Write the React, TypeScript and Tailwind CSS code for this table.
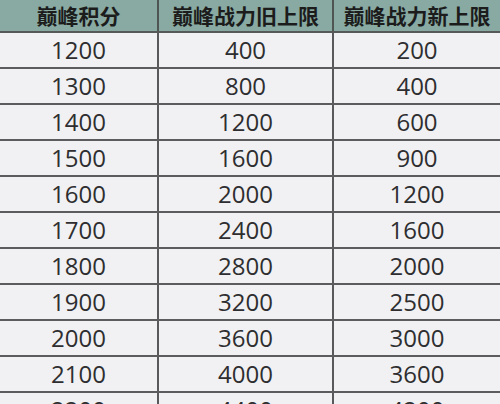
import React from 'react';

const rows = [
  ['1200', '400', '200'],
  ['1300', '800', '400'],
  ['1400', '1200', '600'],
  ['1500', '1600', '900'],
  ['1600', '2000', '1200'],
  ['1700', '2400', '1600'],
  ['1800', '2800', '2000'],
  ['1900', '3200', '2500'],
  ['2000', '3600', '3000'],
  ['2100', '4000', '3600'],
  ['2200', '4400', '4200'],
];

const cjk = { fontFamily: '"Noto Sans CJK SC", "Noto Sans", sans-serif' };
const num = { fontFamily: '"Open Sans", "Noto Sans", sans-serif' };

const App = () => {
  return (
    <div className="w-[500px] h-[404px] overflow-hidden bg-[#f1f1f3]">
      {/* header */}
      <div className="flex h-[33px] bg-[#88aaa2] border-b-2 border-[#555a58] text-[21px] font-bold text-[#1c1c1c] leading-none" style={cjk}>
        <div className="w-[159px] border-r-2 border-[#4f5553] flex items-center justify-center">巅峰积分</div>
        <div className="w-[175px] border-r-2 border-[#4f5553] flex items-center justify-center">巅峰战力旧上限</div>
        <div className="flex-1 flex items-center justify-center">巅峰战力新上限</div>
      </div>

      {rows.map((r, i) => (
        <div key={i} className="flex h-[36px] border-b-2 border-[#5c5c5e] text-[24px] text-[#2e2e30] leading-none" style={num}>
          <div className="w-[159px] border-r-2 border-[#59595b] flex items-center justify-center">{r[0]}</div>
          <div className="w-[175px] border-r-2 border-[#59595b] flex items-center justify-center">{r[1]}</div>
          <div className="flex-1 flex items-center justify-center">{r[2]}</div>
        </div>
      ))}
    </div>
  );
};

export default App;
